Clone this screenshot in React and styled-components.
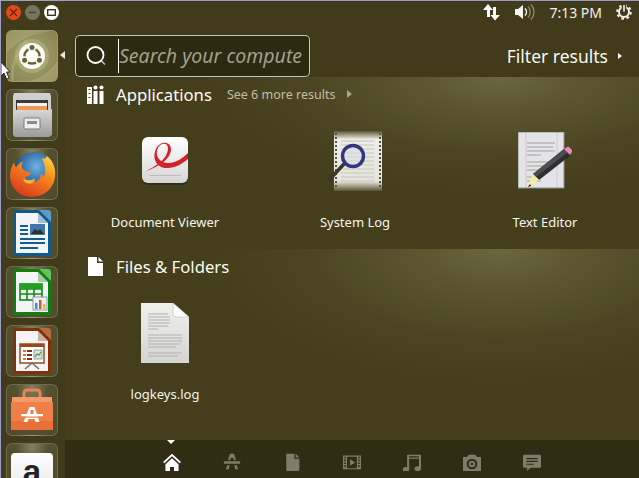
import React from 'react'
import styled, { createGlobalStyle } from 'styled-components'

const GlobalStyle = createGlobalStyle`
  html, body { margin: 0; padding: 0; background: #413b1c; }
  body { font-family: "Noto Sans", "Open Sans", sans-serif; }
`

const Desktop = styled.div`
  position: relative;
  width: 639px;
  height: 478px;
  overflow: hidden;
  display: flex;
  flex-direction: column;
  background: #413b1c;
  box-sizing: border-box;
  border-top: 1px solid #9d9dc8;
  border-left: 1px solid #9d9dc8;
  color: #fff;
`
const Panel = styled.div`
  height: 24px;
  flex: none;
  box-sizing: border-box;
  display: flex;
  align-items: center;
  justify-content: space-between;
  padding: 0 7px 2px 5px;
`
const WindowButtons = styled.div`
  display: flex;
  gap: 4px;
`
const WinButton = styled.div`
  width: 15px;
  height: 15px;
  border-radius: 50%;
  background: ${p => p.$bg};
  display: flex;
  align-items: center;
  justify-content: center;
`
const Indicators = styled.div`
  display: flex;
  align-items: center;
`
const Clock = styled.span`
  font-size: 14px;
  margin: 0 14px 0 14px;
  color: #f0f0ea;
`
const Workspace = styled.div`
  flex: 1;
  display: flex;
  min-height: 0;
`
const Launcher = styled.div`
  width: 64px;
  flex: none;
  padding: 5px 0 0 5px;
  box-sizing: border-box;
  display: flex;
  flex-direction: column;
  gap: 7px;
  overflow: hidden;
`
const LauncherItem = styled.div`
  position: relative;
  width: 52px;
  height: 52px;
  flex: none;
  box-sizing: border-box;
  border-radius: 6px;
  border: 1px solid rgba(255, 255, 255, 0.17);
  background: ${p => p.$active
    ? 'radial-gradient(circle at 50% 50%, #a5a273 0, #94905d 60%, #85814c 100%)'
    : 'radial-gradient(ellipse at 50% 0, #85815f 0, #56512f 45%, #4f4a2a 100%)'};
  display: flex;
  align-items: center;
  justify-content: center;
  overflow: hidden;
`
const ActiveArrow = styled.div`
  position: absolute;
  left: 59px;
  top: 50px;
  width: 0;
  height: 0;
  border-top: 4px solid transparent;
  border-bottom: 4px solid transparent;
  border-right: 5px solid #e8e8e0;
`
const Cursor = styled.svg`
  position: absolute;
  left: -1px;
  top: 61px;
`
const Main = styled.div`
  flex: 1;
  min-width: 0;
  display: flex;
  flex-direction: column;
`
const SearchRow = styled.div`
  height: 52px;
  flex: none;
  display: flex;
  align-items: flex-end;
  justify-content: space-between;
  padding-left: 10px;
`
const SearchBox = styled.div`
  width: 235px;
  height: 42px;
  box-sizing: border-box;
  border: 1px solid rgba(255, 255, 255, 0.72);
  border-radius: 5px;
  background: #2d2a12;
  display: flex;
  align-items: center;
  overflow: hidden;
  padding-left: 9px;
`
const SearchGlyph = styled.svg`
  flex: none;
`
const SearchText = styled.div`
  margin-left: 9px;
  border-left: 1px solid #fff;
  height: 34px;
  line-height: 33px;
  font-size: 19.5px;
  font-style: italic;
  color: #a3a08c;
  white-space: nowrap;
`
const FilterButton = styled.div`
  display: flex;
  align-items: center;
  gap: 10px;
  font-size: 17.5px;
  height: 42px;
  margin-right: 17px;
  color: #f6f6f0;
`
const Triangle = styled.div`
  width: 0;
  height: 0;
  border-top: ${p => p.$size || 3.5}px solid transparent;
  border-bottom: ${p => p.$size || 3.5}px solid transparent;
  border-left: ${p => (p.$size || 3.5) + 1}px solid ${p => p.$color || '#fff'};
`
const Results = styled.div`
  flex: 1;
  min-height: 0;
  display: flex;
  flex-direction: column;
`
const Section = styled.section`
  height: ${p => p.$height}px;
  flex: none;
  box-sizing: border-box;
  padding: 7px 0 0 5px;
  background: radial-gradient(ellipse 300px ${p => p.$glow}px at 435px 0, #6a6640 0, #5a552f 30%, #4b4523 65%, #443e1c 100%);
`
const CategoryHeader = styled.div`
  height: 20px;
  display: flex;
  align-items: center;
`
const CategoryIcon = styled.div`
  width: 42px;
  padding-left: 4px;
  display: flex;
  justify-content: center;
`
const CategoryTitle = styled.span`
  font-size: 16.7px;
  color: #fbfbf6;
`
const MoreLink = styled.span`
  margin-left: 15px;
  margin-right: 12px;
  font-size: 12.5px;
  color: #c0bfa8;
`
const ResultGrid = styled.div`
  display: grid;
  grid-template-columns: repeat(3, 190px);
  margin-top: 25px;
`
const ResultTile = styled.div`
  display: flex;
  flex-direction: column;
  align-items: center;
`
const TileIcon = styled.div`
  height: 64px;
  display: flex;
  align-items: center;
  justify-content: center;
`
const TileLabel = styled.div`
  margin-top: 20px;
  height: 18px;
  line-height: 18px;
  font-size: 13px;
  color: #f4f4ee;
`
const Dock = styled.div`
  position: relative;
  height: 38px;
  flex: none;
  background: #312d14;
  display: flex;
  align-items: center;
  padding-left: 98px;
  gap: 42px;
`
const DockIcon = styled.svg`
  width: 18px;
  height: 18px;
  flex: none;
  fill: ${p => (p.$active ? '#ffffff' : '#7f7d69')};
  margin-top: 6px;
`
const DockMarker = styled.div`
  position: absolute;
  left: 102px;
  top: 0;
  width: 0;
  height: 0;
  border-left: 4px solid transparent;
  border-right: 4px solid transparent;
  border-top: 4px solid #fff;
`

const UbuntuLogo = () => (
  <svg width="50" height="50" viewBox="0 0 50 50">
    <path d="M0 22Q14 4 44 0L0 0Z" fill="#c4c092" opacity=".3" />
    <path d="M6 50Q2 30 20 10" fill="none" stroke="#c9c69b" strokeWidth="3" opacity=".3" />
    <path d="M50 30Q40 46 22 50L50 50Z" fill="#c9c69b" opacity=".3" />
    <circle cx="25" cy="25" r="17" fill="#c9c69b" opacity=".35" />
    <circle cx="25" cy="25" r="13" fill="#fbfbf6" />
    <circle cx="25" cy="25" r="7.500" fill="none" stroke="#66623a" strokeWidth="2.400" />
    <g fill="#fbfbf6">
      <circle cx="25" cy="16.500" r="4" />
      <circle cx="17.600" cy="29.200" r="4" />
      <circle cx="32.400" cy="29.200" r="4" />
    </g>
    <g fill="#66623a">
      <circle cx="25" cy="16.500" r="2.500" />
      <circle cx="17.600" cy="29.200" r="2.500" />
      <circle cx="32.400" cy="29.200" r="2.500" />
    </g>
  </svg>
)

const FileCabinet = () => (
  <svg width="42" height="46" viewBox="0 0 42 46">
    <defs>
      <linearGradient id="cab" x1="0" y1="0" x2="0" y2="1">
        <stop offset="0" stopColor="#d8d8d8" />
        <stop offset="1" stopColor="#9c9c9c" />
      </linearGradient>
    </defs>
    <path d="M3 1h36l1 3v20H2V4z" fill="#cfcfcf" />
    <rect x="5" y="8" width="32" height="12" fill="#3c3a36" />
    <rect x="6" y="11" width="30" height="3" fill="#f2f2ee" />
    <rect x="6" y="14" width="30" height="5" fill="#ee9a50" />
    <path d="M2 18h36l3 -1v26l-3 2H4l-2-2z" fill="url(#cab)" />
    <rect x="13" y="26" width="16" height="11" rx="1" fill="#eeeeee" stroke="#7d7d7d" />
    <rect x="16" y="29" width="10" height="3" fill="#8a8a8a" />
  </svg>
)

const Firefox = () => (
  <svg width="47" height="47" viewBox="0 0 46 46">
    <defs>
      <radialGradient id="globe" cx=".55" cy=".35" r=".6">
        <stop offset="0" stopColor="#6cb4e4" />
        <stop offset="1" stopColor="#14457e" />
      </radialGradient>
      <linearGradient id="fox" x1=".9" y1="0" x2=".3" y2="1">
        <stop offset="0" stopColor="#ffd93a" />
        <stop offset=".4" stopColor="#f78a1d" />
        <stop offset="1" stopColor="#d8391c" />
      </linearGradient>
    </defs>
    <circle cx="25" cy="21" r="20" fill="url(#globe)" />
    <path d="M37 5c7 5 9 14 8 20-1 12-11 20-23 20C10 45 1 36 1 24c0-5 2-10 4-13 0 2 1 4 2 5 2-3 4-5 7-6-2 3-2 5-1 7 1 3 5 3 8 4 1 2-2 4-5 4 0 4 5 6 9 5 4-1 7-4 6-8 2 1 3 2 3 4 2-5 2-13-2-19 3 1 4 1 5-2z" fill="url(#fox)" />
    <path d="M14 27c3 2 8 2 11 0 1 3-2 5-5 5s-6-2-6-5z" fill="#f9c23c" opacity=".85" />
  </svg>
)

const OfficeDoc = ({ rim, corner, children }) => (
  <svg width="40" height="48" viewBox="0 0 40 48">
    <rect x="1" y="1" width="38" height="46" rx="3" fill={rim} />
    <path d="M27 1h9a3 3 0 0 1 3 3v9z" fill={corner} />
    <path d="M4 4h22l10 10v30H4z" fill="#f4f4f6" />
    <path d="M26 4v10h10z" fill={rim} opacity=".35" />
    {children}
  </svg>
)

const WriterIcon = () => (
  <OfficeDoc rim="#0f5a8c" corner="#5d9cc4">
    <rect x="8" y="16" width="8" height="2" fill="#135d8f" />
    <rect x="8" y="20" width="8" height="2" fill="#135d8f" />
    <rect x="8" y="24" width="8" height="2" fill="#135d8f" />
    <rect x="8" y="29" width="25" height="2" fill="#135d8f" />
    <rect x="8" y="33" width="25" height="2" fill="#135d8f" />
    <rect x="8" y="38" width="18" height="2" fill="#135d8f" />
    <rect x="18" y="15" width="15" height="11" fill="#3f78a8" />
    <path d="M19 25l4-5 3 2 2-2 4 5z" fill="#2f2f2f" />
  </OfficeDoc>
)

const CalcIcon = () => (
  <OfficeDoc rim="#0f7f10" corner="#5fc45f">
    <g fill="none" stroke="#118a12" strokeWidth="1.600">
      <rect x="8" y="16" width="22" height="16" />
      <path d="M8 21h22M8 26h22M15 16v16M22 16v16" />
    </g>
    <rect x="8" y="16" width="22" height="5" fill="#22a023" />
    <rect x="21" y="29" width="14" height="13" fill="#eef0f4" stroke="#8b99a8" />
    <rect x="23" y="35" width="2.500" height="6" fill="#3a8fd0" />
    <rect x="27" y="32" width="2.500" height="9" fill="#d8582b" />
    <rect x="31" y="36" width="2.500" height="5" fill="#eeb92c" />
  </OfficeDoc>
)

const ImpressIcon = () => (
  <OfficeDoc rim="#7d3208" corner="#b66b44">
    <rect x="8" y="17" width="24" height="19" fill="#fff" stroke="#9a4a1a" strokeWidth="1.500" />
    <rect x="8" y="17" width="24" height="3" fill="#9a4a1a" />
    <rect x="11" y="23" width="3" height="2" fill="#d2733b" />
    <rect x="15" y="23" width="5" height="2" fill="#7d3208" />
    <rect x="11" y="27" width="3" height="2" fill="#d2733b" />
    <rect x="15" y="27" width="5" height="2" fill="#7d3208" />
    <rect x="11" y="31" width="3" height="2" fill="#d2733b" />
    <rect x="15" y="31" width="5" height="2" fill="#7d3208" />
    <rect x="22" y="23" width="8" height="9" fill="#dce4d8" stroke="#777" strokeWidth=".7" />
    <path d="M23 30l2-3 2 1 2-3" fill="none" stroke="#3f9a3f" strokeWidth="1.200" />
    <path d="M20 36l-7 6M20 36l7 6" stroke="#666" strokeWidth="1.200" />
  </OfficeDoc>
)

const ShopBag = () => (
  <svg width="44" height="46" viewBox="0 0 44 46">
    <path d="M14 12V6a3 3 0 0 1 3-3h10a3 3 0 0 1 3 3v6" fill="none" stroke="#e8835a" strokeWidth="3" />
    <path d="M4 10h36l3 6v27H1V16z" fill="#ef7f48" />
    <rect x="2" y="10" width="40" height="5" fill="#f39a6a" />
    <rect x="1" y="34" width="42" height="9" fill="#e96f38" />
    <path d="M19.500 20h5l5 15h-4l-1-3h-6l-1 3h-4z" fill="#fff" />
    <rect x="11" y="27" width="22" height="2.500" fill="#fff" />
    <rect x="20.500" y="23" width="3" height="4" fill="#ef7f48" />
    <rect x="10" y="29.500" width="24" height="1.200" fill="#ef7f48" />
  </svg>
)

const AmazonMark = styled.div`
  width: 42px;
  height: 44px;
  margin-top: 12px;
  border-radius: 4px 4px 0 0;
  background: linear-gradient(#fff, #e4e4e4);
  color: #222;
  font: bold 33px/38px "Liberation Sans", sans-serif;
  text-align: center;
`

const DocViewer = () => (
  <svg width="46" height="48" viewBox="0 0 46 48">
    <defs>
      <linearGradient id="viewer" x1="0" y1="0" x2="0" y2="1">
        <stop offset="0" stopColor="#ffffff" />
        <stop offset="1" stopColor="#d5d5d5" />
      </linearGradient>
    </defs>
    <rect x="0" y="2" width="46" height="46" rx="6" fill="#1b1a0c" opacity=".45" />
    <rect x="0" y="0" width="46" height="46" rx="6" fill="url(#viewer)" />
    <path d="M4 34C13 30 26 22 26 11c0-5-7-6-10 0-4 8 2 16 12 15 7-1 13-5 18-10v6c-6 5-13 9-20 9-12 1-17-11-11-21 5-7 14-5 14 2 0 11-15 19-25 22z" fill="#d4202a" />
    <rect x="7" y="38" width="32" height="1" fill="#bdbdbd" />
  </svg>
)

const SystemLog = () => (
  <svg width="54" height="60" viewBox="0 0 54 60">
    <defs>
      <linearGradient id="paper" x1="0" y1="0" x2="0" y2="1">
        <stop offset="0" stopColor="#59542f" />
        <stop offset=".14" stopColor="#eeeee8" />
        <stop offset=".84" stopColor="#e4e4dc" />
        <stop offset="1" stopColor="#59542f" />
      </linearGradient>
    </defs>
    <rect x="6" y="0" width="48" height="60" fill="url(#paper)" />
    <path d="M8 2v56M52 2v56" stroke="#55534a" strokeWidth="2" strokeDasharray="2 2" />
    <path d="M13 10h33M13 14h33M13 18h33M13 22h33M13 26h33M13 30h33M13 34h33M13 38h33M13 42h33M13 46h33M13 50h33" stroke="#c6c6be" strokeWidth="1" />
    <path d="M16 33L2 48" stroke="#3b352a" strokeWidth="3.500" strokeLinecap="round" />
    <circle cx="25" cy="25" r="10.500" fill="#d8dce8" fillOpacity=".55" stroke="#34377f" strokeWidth="3.400" />
  </svg>
)

const TextEditor = () => (
  <svg width="54" height="58" viewBox="0 0 54 58">
    <rect x="0" y="0" width="46" height="56" fill="#e4e4e8" stroke="#8f8e84" />
    <path d="M8 1v54" stroke="#d9b6c0" strokeWidth=".8" />
    <path d="M39 1v54" stroke="#bcc6e0" strokeWidth=".8" />
    <path d="M9 11h28M9 15h26M9 19h28M9 23h14M9 30h28M9 34h24M9 38h18M9 45h16M9 49h14" stroke="#a2a19c" strokeWidth="1.200" />
    <path d="M46 17l7 6-32 25-6-6z" fill="#2f2f2f" />
    <path d="M46 17l4 3-32 25-3-3z" fill="#4e4e4e" />
    <path d="M46 17l3-2a2 2 0 0 1 2 0l3 3a2 2 0 0 1 0 2l-2 3z" fill="#e78ab4" />
    <path d="M15 42l6 6-8 5-3 2 1-4z" fill="#f3eca0" />
    <path d="M12 52l-2 3 3-1z" fill="#111" />
  </svg>
)

const DocFile = () => (
  <svg width="48" height="60" viewBox="0 0 48 60">
    <defs>
      <linearGradient id="sheet" x1="0" y1="0" x2="0" y2="1">
        <stop offset="0" stopColor="#f0f0ee" />
        <stop offset="1" stopColor="#d4d4d0" />
      </linearGradient>
    </defs>
    <path d="M0 0h32l16 14v46H0z" fill="url(#sheet)" />
    <path d="M32 0l16 14H35a3 3 0 0 1-3-3z" fill="#fbfbfa" stroke="#bdbdb8" strokeWidth=".6" />
    <path d="M7 11h20M7 14h22M7 17h22M7 20h22M7 23h20M7 26h10M7 32h34M7 35h34M7 38h34M7 41h32M7 44h28M7 50h34M7 53h30" stroke="#b2b2ad" strokeWidth="1" />
  </svg>
)

const resultsA = [
  { label: 'Document Viewer', icon: <DocViewer /> },
  { label: 'System Log', icon: <SystemLog /> },
  { label: 'Text Editor', icon: <TextEditor /> },
]

const launcherIcons = [
  <FileCabinet />, <Firefox />, <WriterIcon />, <CalcIcon />, <ImpressIcon />, <ShopBag />, <AmazonMark>a</AmazonMark>,
]

const dockPaths = [
  'M12 2L1 12l1.600 1.600L12 5l9.400 8.600L23 12zM12 7.500L4 14.600V23h5.500v-5h5v5H20v-8.400z',
  'M9.500 2h5l2.600 8h-2.700l-.9-3h-3l-.9 3H6.900zM2 11h20v1.500a1.500 1.500 0 0 1-1.500 1.500h-17A1.500 1.500 0 0 1 2 12.500zM6 16h3l-.8 5H4.500zM15 16h3l1.500 5h-3.700z',
  'M5 2h10v6h6v13.500a1.500 1.500 0 0 1-1.500 1.500h-13A1.500 1.500 0 0 1 5 21.500zM16.500 2L21 6.500h-4.500z',
  'M1 4h22v17H1zM2.500 5.500v2h2v-2zm0 3.500v2h2V9zm0 3.500v2h2v-2zm0 3.500v2h2v-2zm17-10.500v2h2v-2zm0 3.500v2h2V9zm0 3.500v2h2v-2zm0 3.500v2h2v-2zM6 5.500v14h12v-14zM9.500 8.500l6.500 4-6.500 4z',
  'M6 3h17v17.500h-.1a4 3 0 1 1-2.400-3V8H8.500v13.500h-.1a4 3 0 1 1-2.400-3zM8.500 5v1.500h12V5z',
  'M8 3h8l2 3h4a1.500 1.500 0 0 1 1.500 1.500v14A1.500 1.500 0 0 1 22 23H2a1.500 1.500 0 0 1-1.500-1.500v-14A1.500 1.500 0 0 1 2 6h4zM12 8a6.500 6.500 0 1 0 0 13 6.500 6.500 0 0 0 0-13zm0 2.500a4 4 0 1 1 0 8 4 4 0 0 1 0-8zm0 2.500a1.500 1.500 0 1 0 0 3 1.500 1.500 0 0 0 0-3z',
  'M2.500 3h19A1.500 1.500 0 0 1 23 4.500v13a1.500 1.500 0 0 1-1.500 1.500H10l-4 4v-4H2.500A1.500 1.500 0 0 1 1 17.500v-13A1.500 1.500 0 0 1 2.500 3zM5 7v1.500h14V7zm0 3.500V12h14v-1.500zM5 14v1.500h9V14z',
]

export default function App() {
  return (
    <Desktop>
      <GlobalStyle />
      <Panel>
        <WindowButtons>
          <WinButton $bg="#e2491b">
            <svg width="9" height="9" viewBox="0 0 9 9"><path d="M1 1l7 7M8 1L1 8" stroke="#6b2208" strokeWidth="1.300" /></svg>
          </WinButton>
          <WinButton $bg="#75745f">
            <svg width="9" height="9" viewBox="0 0 9 9"><path d="M1 4.500h7" stroke="#44422c" strokeWidth="1.300" /></svg>
          </WinButton>
          <WinButton $bg="#fbfbf8">
            <svg width="9" height="9" viewBox="0 0 9 9"><rect x=".7" y="1.700" width="7.600" height="5.600" fill="none" stroke="#2d2a12" strokeWidth="1.300" /></svg>
          </WinButton>
        </WindowButtons>
        <Indicators>
          <svg width="18" height="18" viewBox="0 0 18 18" fill="#fff">
            <path d="M5 1l5 6H7v7H4V7H0zM10 4h3v8h4l-5 5.500L7.500 12H10z" />
          </svg>
          <svg width="20" height="16" viewBox="0 0 20 16" style={{ marginLeft: 14 }}>
            <path d="M0 5h3l5-4v14l-5-4H0z" fill="#f4f4f0" />
            <path d="M10 4.500a5 5 0 0 1 0 7" fill="none" stroke="#f4f4f0" strokeWidth="1.500" />
            <path d="M13 2.500a8 8 0 0 1 0 11M16 .5a11 11 0 0 1 0 15" fill="none" stroke="#8f8d78" strokeWidth="1.300" />
          </svg>
          <Clock>7:13 PM</Clock>
          <svg width="16" height="16" viewBox="0 0 16 16">
            <circle cx="8" cy="8" r="5" fill="none" stroke="#f4f4f0" strokeWidth="2" />
            <circle cx="8" cy="8" r="6.800" fill="none" stroke="#f4f4f0" strokeWidth="2" strokeDasharray="2.600 2.740" />
            <rect x="5.800" y="0" width="4.400" height="6" fill="#413b1c" />
            <rect x="7.200" y="1" width="1.600" height="6.500" fill="#f4f4f0" />
          </svg>
        </Indicators>
      </Panel>
      <Workspace>
        <Launcher>
          <LauncherItem $active><UbuntuLogo /></LauncherItem>
          {launcherIcons.map((icon, i) => (
            <LauncherItem key={i}>{icon}</LauncherItem>
          ))}
        </Launcher>
        <Main>
          <SearchRow>
            <SearchBox>
              <SearchGlyph width="24" height="24" viewBox="0 0 24 24">
                <circle cx="10.500" cy="11" r="8" fill="none" stroke="#fff" strokeWidth="1.800" />
                <path d="M16.500 17l3.500 3.500" stroke="#c9c9c0" strokeWidth="1.500" />
              </SearchGlyph>
              <SearchText>Search your compute</SearchText>
            </SearchBox>
            <FilterButton>
              Filter results
              <Triangle />
            </FilterButton>
          </SearchRow>
          <Results>
            <Section $height={172} $glow={120}>
              <CategoryHeader>
                <CategoryIcon>
                  <svg width="17" height="19" viewBox="0 0 17 19" fill="#fff">
                    <path d="M0 2h5v17H0zM1.500 5h2V4h-2zM1.500 9h2V8h-2zM1.500 13h2v-1h-2z" fillRule="evenodd" />
                    <path d="M6.500 6h4v13h-4zM12.500 6h4v13h-4z" />
                    <circle cx="8.500" cy="2.500" r="2" />
                    <circle cx="14.500" cy="2.500" r="2" />
                  </svg>
                </CategoryIcon>
                <CategoryTitle>Applications</CategoryTitle>
                <MoreLink>See 6 more results</MoreLink>
                <Triangle $color="#a8a690" $size={4} />
              </CategoryHeader>
              <ResultGrid>
                {resultsA.map(r => (
                  <ResultTile key={r.label}>
                    <TileIcon>{r.icon}</TileIcon>
                    <TileLabel>{r.label}</TileLabel>
                  </ResultTile>
                ))}
              </ResultGrid>
            </Section>
            <Section $height={191} $glow={140}>
              <CategoryHeader>
                <CategoryIcon>
                  <svg width="15" height="19" viewBox="0 0 15 19" fill="#fff">
                    <path d="M0 0h9v6h6v13H0zM10.500 0L15 4.500h-4.500z" />
                  </svg>
                </CategoryIcon>
                <CategoryTitle>Files &amp; Folders</CategoryTitle>
              </CategoryHeader>
              <ResultGrid>
                <ResultTile>
                  <TileIcon><DocFile /></TileIcon>
                  <TileLabel>logkeys.log</TileLabel>
                </ResultTile>
              </ResultGrid>
            </Section>
          </Results>
          <Dock>
            <DockMarker />
            {dockPaths.map((d, i) => (
              <DockIcon key={i} viewBox="1 1 22 22" $active={i === 0}>
                <path d={d} fillRule="evenodd" />
              </DockIcon>
            ))}
          </Dock>
        </Main>
      </Workspace>
      <ActiveArrow />
      <Cursor width="11" height="18" viewBox="0 0 11 18">
        <path d="M1 0v14l3-3 2.500 6 2.500-1-2.500-6H10z" fill="#fff" stroke="#111" strokeWidth=".8" />
      </Cursor>
    </Desktop>
  )
}
